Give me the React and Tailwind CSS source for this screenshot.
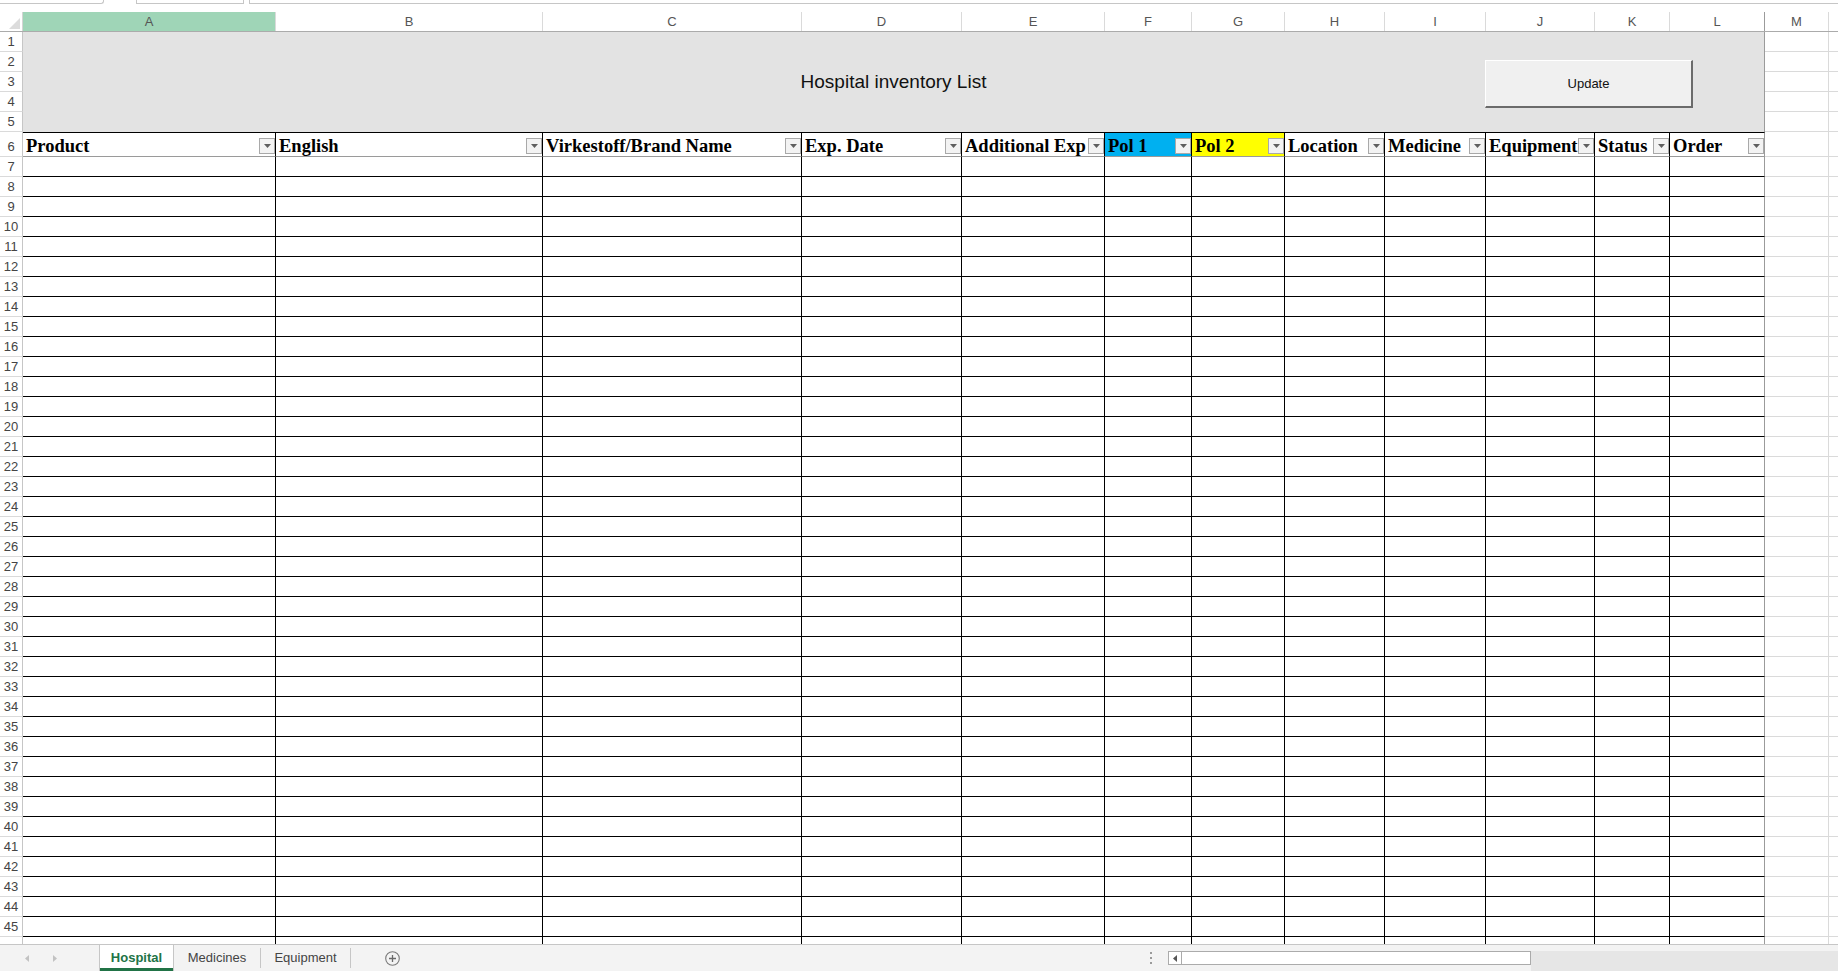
const cols = [
  { key: 'A', w: 'w-[253px]', label: 'Product' },
  { key: 'B', w: 'w-[267px]', label: 'English' },
  { key: 'C', w: 'w-[259px]', label: 'Virkestoff/Brand Name' },
  { key: 'D', w: 'w-[160px]', label: 'Exp. Date' },
  { key: 'E', w: 'w-[143px]', label: 'Additional Exp' },
  { key: 'F', w: 'w-[87px]', label: 'Pol 1', bg: 'bg-[#00b0f0]' },
  { key: 'G', w: 'w-[93px]', label: 'Pol 2', bg: 'bg-[#ffff00]' },
  { key: 'H', w: 'w-[100px]', label: 'Location' },
  { key: 'I', w: 'w-[101px]', label: 'Medicine' },
  { key: 'J', w: 'w-[109px]', label: 'Equipment' },
  { key: 'K', w: 'w-[75px]', label: 'Status' },
  { key: 'L', w: 'w-[95px]', label: 'Order', last: true },
];

// row 46 is only partly visible above the tab bar, its number is hidden
const dataRows = Array.from({ length: 40 }, (_, i) => i + 7);

function RowNum({ n, tall }) {
  return (
    <div
      className={`w-[23px] shrink-0 flex items-end justify-center pb-[2px] border-r border-b border-r-[#c6c6c6] border-b-[#dadada] text-[13px] leading-[15px] text-[#444] ${tall ? 'h-[25px]' : 'h-[20px]'}`}
    >
      {n < 46 ? n : ''}
    </div>
  );
}

function FilterButton() {
  return (
    <div className="w-[16px] h-[16px] shrink-0 self-end mb-[2px] border border-[#a9a9a9] bg-[#f3f3f3] flex items-center justify-center">
      <svg width="7" height="4" viewBox="0 0 7 4">
        <path d="M0 0h7L3.5 4z" fill="#5f5f5f" />
      </svg>
    </div>
  );
}

function ExtraCells({ tall }) {
  return (
    <>
      <div className={`w-[64px] shrink-0 border-r border-b border-[#dadada] ${tall ? 'h-[25px]' : 'h-[20px]'}`} />
      <div className={`flex-1 border-b border-[#dadada] ${tall ? 'h-[25px]' : 'h-[20px]'}`} />
    </>
  );
}

export default function App() {
  return (
    <div className="w-[1838px] h-[971px] overflow-hidden flex flex-col bg-white font-['Liberation_Sans',Arial,sans-serif]">
      {/* remains of the formula bar */}
      <div className="h-[12px] shrink-0 flex">
        <div className="w-[104px] h-[4px] border-b border-r border-[#c6c6c6] rounded-br-[3px]" />
        <div className="w-[32px] h-[4px]" />
        <div className="w-[108px] h-[4px] border-b border-l border-r border-[#c6c6c6]" />
        <div className="w-[5px] h-[4px]" />
        <div className="flex-1 h-[4px] border-b border-l border-[#c6c6c6]" />
      </div>

      <div className="flex-1 overflow-hidden">
        {/* column letters */}
        <div className="flex h-[20px] border-b border-[#ababab]">
          <div className="w-[23px] shrink-0 border-r border-[#d4d4d4] flex items-end justify-end p-[2px]">
            <svg width="11" height="11" viewBox="0 0 11 11">
              <path d="M11 0v11H0z" fill="#dcdcdc" />
            </svg>
          </div>
          {cols.map((c) => (
            <div
              key={c.key}
              className={`${c.w} shrink-0 flex items-center justify-center text-[13px] text-[#555] border-r ${c.last ? 'border-[#9b9b9b]' : 'border-[#dadada]'} ${c.key === 'A' ? 'bg-[#9fd5b7]' : ''}`}
            >
              {c.key}
            </div>
          ))}
          <div className="w-[64px] shrink-0 flex items-center justify-center text-[13px] text-[#555] border-r border-[#dadada]">M</div>
          <div className="flex-1" />
        </div>

        {/* rows 1-5: title band */}
        <div className="flex">
          <div className="flex flex-col">
            {[1, 2, 3, 4, 5].map((n) => (
              <RowNum key={n} n={n} />
            ))}
          </div>
          <div className="w-[1742px] shrink-0 h-[100px] bg-[#e3e3e3] border-r border-[#9b9b9b] relative flex items-center justify-center">
            <span className="text-[19px] text-[#111]">Hospital inventory List</span>
            <button className="absolute left-[1462px] top-[28px] w-[208px] h-[48px] bg-[#f0f0f0] border-t border-l border-t-white border-l-white border-r-2 border-b-2 border-r-[#6b6b6b] border-b-[#6b6b6b] text-[13px] text-[#111] flex items-center justify-center">
              Update
            </button>
          </div>
          <div className="flex-1 flex flex-col">
            {[1, 2, 3, 4, 5].map((n) => (
              <div key={n} className="flex">
                <ExtraCells />
              </div>
            ))}
          </div>
        </div>

        {/* row 6: table header */}
        <div className="flex">
          <RowNum n={6} tall />
          {cols.map((c) => (
            <div
              key={c.key}
              className={`${c.w} shrink-0 h-[25px] flex justify-between border-t border-t-black border-b border-b-[#9a9a9a] border-r ${c.last ? 'border-r-[#9b9b9b]' : 'border-r-black'} ${c.bg || 'bg-white'}`}
            >
              <span className="self-center pl-[3px] pt-[4px] whitespace-nowrap font-['Liberation_Serif','Times_New_Roman',serif] font-bold text-[18.5px] leading-none text-black">
                {c.label}
              </span>
              <FilterButton />
            </div>
          ))}
          <ExtraCells tall />
        </div>

        {/* data rows */}
        {dataRows.map((n) => (
          <div key={n} className="flex">
            <RowNum n={n} />
            {cols.map((c) => (
              <div
                key={c.key}
                className={`${c.w} shrink-0 h-[20px] border-b border-b-black border-r ${c.last ? 'border-r-[#9b9b9b]' : 'border-r-black'}`}
              />
            ))}
            <ExtraCells />
          </div>
        ))}
      </div>

      {/* sheet tabs + scroll bar */}
      <div className="h-[27px] shrink-0 flex bg-[#f3f3f3] border-t border-[#c6c6c6]">
        <div className="w-[1140px] shrink-0 flex items-center">
          <div className="w-[99px] shrink-0 flex items-center">
            <svg className="ml-[25px]" width="4" height="7" viewBox="0 0 4 7">
              <path d="M4 0v7L0 3.5z" fill="#c2c2c2" />
            </svg>
            <svg className="ml-[24px]" width="4" height="7" viewBox="0 0 4 7">
              <path d="M0 0v7l4-3.5z" fill="#c2c2c2" />
            </svg>
          </div>
          <div className="w-[75px] h-full shrink-0 bg-white border-l border-r border-[#c6c6c6] flex items-center justify-center text-[13px] font-bold text-[#217346] relative">
            Hospital
            <div className="absolute left-0 right-0 bottom-0 h-[3px] bg-[#217346]" />
          </div>
          <div className="w-[86px] shrink-0 flex items-center justify-center text-[13px] text-[#444]">Medicines</div>
          <div className="w-px h-[20px] bg-[#c6c6c6]" />
          <div className="w-[89px] shrink-0 flex items-center justify-center text-[13px] text-[#444]">Equipment</div>
          <div className="w-px h-[20px] bg-[#c6c6c6]" />
          <svg className="ml-[34px]" width="15" height="15" viewBox="0 0 15 15">
            <circle cx="7.5" cy="7.5" r="6.8" fill="none" stroke="#7a7a7a" strokeWidth="1.1" />
            <path d="M7.5 4v7M4 7.5h7" stroke="#6a6a6a" strokeWidth="1.3" />
          </svg>
        </div>
        <div className="w-[22px] shrink-0 flex flex-col items-center justify-center gap-[3px]">
          <div className="w-[2px] h-[2px] bg-[#9a9a9a]" />
          <div className="w-[2px] h-[2px] bg-[#9a9a9a]" />
          <div className="w-[2px] h-[2px] bg-[#9a9a9a]" />
        </div>
        <div className="w-[6px] shrink-0" />
        <div className="w-[363px] shrink-0 self-center h-[14px] flex border border-[#ababab] bg-white">
          <div className="w-[13px] h-full border-r border-[#ababab] flex items-center justify-center">
            <svg width="4" height="7" viewBox="0 0 4 7">
              <path d="M4 0v7L0 3.5z" fill="#555" />
            </svg>
          </div>
        </div>
        <div className="flex-1 mt-[6px] bg-[#e6e6e6]" />
      </div>
    </div>
  );
}
